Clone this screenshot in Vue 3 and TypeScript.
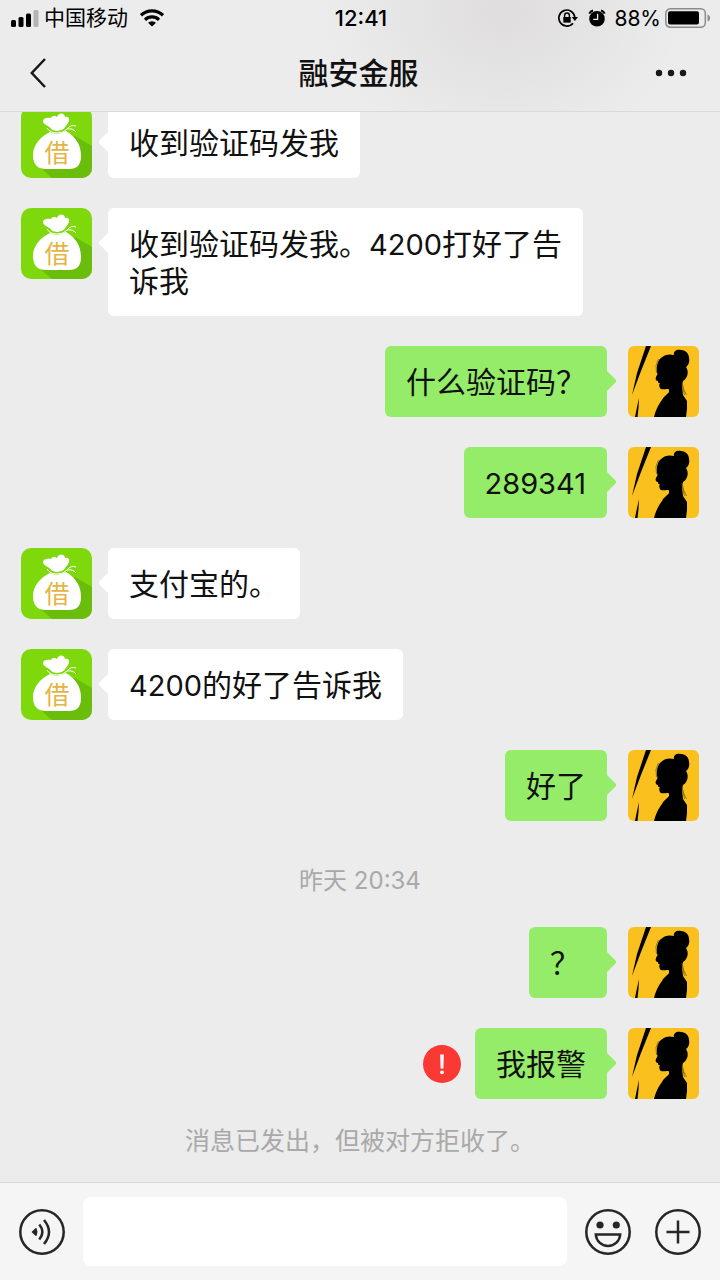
<script setup lang="ts">
import { ref } from 'vue'

interface Message {
  kind: 'message'
  id: number
  from: 'them' | 'me'
  text: string
  failed?: boolean
}

interface Note {
  kind: 'time' | 'notice'
  id: number
  text: string
}

interface Run {
  text: string
  latin: boolean
}

const title = '融安金服'
const draft = ref('')

const entries: (Message | Note)[] = [
  { kind: 'message', id: 1, from: 'them', text: '收到验证码发我' },
  { kind: 'message', id: 2, from: 'them', text: '收到验证码发我。4200打好了告诉我' },
  { kind: 'message', id: 3, from: 'me', text: '什么验证码\uff1f' },
  { kind: 'message', id: 4, from: 'me', text: '289341' },
  { kind: 'message', id: 5, from: 'them', text: '支付宝的。' },
  { kind: 'message', id: 6, from: 'them', text: '4200的好了告诉我' },
  { kind: 'message', id: 7, from: 'me', text: '好了' },
  { kind: 'time', id: 8, text: '昨天 20:34' },
  { kind: 'message', id: 9, from: 'me', text: '\uff1f' },
  { kind: 'message', id: 10, from: 'me', text: '我报警', failed: true },
  { kind: 'notice', id: 11, text: '消息已发出\uff0c但被对方拒收了。' },
]

// Digits are set slightly smaller than the Chinese characters around them.
function runs(text: string): Run[] {
  return text
    .split(/(\d+)/)
    .filter((part) => part !== '')
    .map((part) => ({ text: part, latin: /^\d+$/.test(part) }))
}
</script>

<template>
  <div class="screen">
    <header class="top">
      <div class="status">
        <div class="status-side">
          <svg class="signal" width="28" height="18" viewBox="0 0 28 18" aria-hidden="true">
            <rect x="0" y="11" width="5" height="7" rx="1.5" />
            <rect x="7.5" y="8" width="5" height="10" rx="1.5" />
            <rect x="15" y="4.5" width="5" height="13.5" rx="1.5" />
            <rect x="22.5" y="1" width="5" height="17" rx="1.5" fill="#b4b4b4" />
          </svg>
          <span class="carrier">中国移动</span>
          <svg class="wifi" width="24" height="18" viewBox="0 0 24 18" fill="none" stroke="#000" stroke-width="3.2" aria-hidden="true">
            <path d="M1 6.3A15.8 15.8 0 0 1 23 6.3" />
            <path d="M5 10.8A10 10 0 0 1 19 10.8" />
            <path d="M12 17.5L8 13.8A5.8 5.8 0 0 1 16 13.8Z" fill="#000" stroke="none" />
          </svg>
        </div>
        <time class="clock">12:41</time>
        <div class="status-side status-right">
          <svg width="20" height="18" viewBox="0 0 20 18" fill="none" stroke="#000" stroke-width="1.7" aria-hidden="true">
            <path d="M15 14.2A8 8 0 1 1 16.8 8" />
            <path d="M13.7 8H20L16.9 12Z" fill="#000" stroke="none" />
            <rect x="5.3" y="8" width="7.4" height="5.6" fill="#000" stroke="none" />
            <path d="M6.6 8.5V6.4a2.4 2.4 0 0 1 4.8 0V8.5" stroke-width="1.4" />
          </svg>
          <svg width="18" height="18" viewBox="0 0 18 18" aria-hidden="true">
            <circle cx="9" cy="9.8" r="7.8" />
            <path d="M1.3 4.6A6 6 0 0 1 5 1.5M16.7 4.6A6 6 0 0 0 13 1.5" stroke="#000" stroke-width="2" fill="none" />
            <path d="M9.6 4.8V10.3H5.3" fill="none" stroke="#ececec" stroke-width="1.3" />
          </svg>
          <span class="percent">88%</span>
          <svg width="46" height="20" viewBox="0 0 46 20" aria-hidden="true">
            <rect x="0.8" y="0.8" width="39.5" height="18.4" rx="4.5" fill="none" stroke="#8c8c8c" stroke-width="1.5" />
            <rect x="3" y="3.2" width="31" height="13.4" rx="2" />
            <path d="M42.5 6.5C46 7.5 46 12.5 42.5 13.5Z" fill="#8c8c8c" />
          </svg>
        </div>
      </div>
      <nav class="nav">
        <button class="icon-button" type="button" aria-label="返回">
          <svg width="18" height="32" viewBox="0 0 18 32" fill="none" stroke="#181818" stroke-width="2.5">
            <path d="M15 2L1.8 16L15 30" />
          </svg>
        </button>
        <h1 class="title">{{ title }}</h1>
        <button class="icon-button more" type="button" aria-label="更多">
          <svg width="32" height="8" viewBox="0 0 32 8" fill="#181818">
            <circle cx="4" cy="4" r="3.2" />
            <circle cx="16" cy="4" r="3.2" />
            <circle cx="28" cy="4" r="3.2" />
          </svg>
        </button>
      </nav>
    </header>

    <main class="chat">
      <template v-for="entry in entries" :key="entry.id">
        <div v-if="entry.kind === 'message'" class="row" :class="entry.from">
          <svg v-if="entry.from === 'them'" class="avatar" viewBox="0 0 71 71" aria-hidden="true">
            <rect width="71" height="71" fill="#7fd80c" />
            <path d="M54 29L71 39V71H31L16 58Z" fill="#6bbd0b" />
            <path d="M31 23C28 18 22 18 22 14C22 11 27 10 30 11C31 8 35 9 36 10C37 6 43 5 44 10C47 9 49 11 48 14C47 17 45 18 43 22Q37 26 31 23Z" fill="#fff" />
            <path d="M29 25C19 30 12 38 12 48C12 58 17 62 25 62H48C56 62 60 58 60 49C60 38 55 30 45 24Q36 29 29 25Z" fill="#fff" />
            <path d="M26 21Q29 26 36 26T46 22Q50 17 55 19M46 22Q52 21 55 25" fill="none" stroke="#fff" stroke-width="1" />
            <path d="M28 21.5Q31 24.5 36 24.5T45 21" fill="none" stroke="#7fd80c" stroke-width="1" />
            <text x="36" y="55" class="bag-label">借</text>
          </svg>
          <svg v-else class="avatar" viewBox="0 0 71 71" aria-hidden="true">
            <rect width="71" height="71" fill="#fac01d" />
            <path d="M18 0H23L13 25L4 49L9 27Z" />
            <path d="M11 52L10.5 62L9.5 71H7L9 61Z" />
            <path d="M26 71C28 63 31 58 34 54C36 50 40 48 41 46V43.5C39 42 36 44 33 43C31 42 32 40 31 39L32 37.5L30 36.5V35C28 35 27 33 28 31L29.5 28C28 23 29 15 33 12C37 8 42 8 46 9C45 5 49 3 53 4C58 4 61 8 61 12C62 16 60 20 58 21C61 25 60 32 55 35L54 40L55 49L59 55L59 63L58 71Z" />
            <path d="M30.5 13Q26.5 19 28.5 27M54 36Q55 44 58.5 49M54 38L56.5 49" fill="none" stroke="#6d5710" stroke-width="0.7" />
          </svg>
          <p class="bubble">
            <template v-for="(run, index) in runs(entry.text)" :key="index"><span v-if="run.latin" class="latin">{{ run.text }}</span><template v-else>{{ run.text }}</template></template>
          </p>
          <button v-if="entry.from === 'me' && entry.failed" class="resend" type="button" aria-label="重新发送">
            <svg width="38" height="38" viewBox="0 0 38 38">
              <circle cx="19" cy="19" r="19" fill="#fa3834" />
              <path d="M17.2 9.5H20.8L20.4 23.5H17.6Z" fill="#fff" />
              <circle cx="19" cy="27.3" r="1.9" fill="#fff" />
            </svg>
          </button>
        </div>
        <p v-else class="note" :class="entry.kind">{{ entry.text }}</p>
      </template>
    </main>

    <footer class="composer">
      <button class="icon-button" type="button" aria-label="语音">
        <svg width="46" height="46" viewBox="0 0 46 46" fill="none" stroke="#262626" stroke-width="2.5">
          <circle cx="23" cy="23" r="21.7" />
          <path d="M13.5 23L17 19.8Q18.5 23 17 26.2Z" fill="#262626" stroke-width="1.5" stroke-linejoin="round" />
          <path d="M20.3 15.5Q26.5 23 20.3 30.5" />
          <path d="M25 11Q35 23 25 35" />
        </svg>
      </button>
      <input v-model="draft" class="draft" type="text" aria-label="消息" />
      <button class="icon-button" type="button" aria-label="表情">
        <svg width="46" height="46" viewBox="0 0 46 46" fill="none" stroke="#262626" stroke-width="2.5">
          <circle cx="23" cy="23" r="21.7" />
          <circle cx="15" cy="16" r="3.6" fill="#262626" stroke="none" />
          <circle cx="31.3" cy="16" r="3.6" fill="#262626" stroke="none" />
          <path d="M10.8 25.5H35.2C34.8 32 29.5 37 23 37S11.2 32 10.8 25.5Z" />
        </svg>
      </button>
      <button class="icon-button add" type="button" aria-label="添加">
        <svg width="46" height="46" viewBox="0 0 46 46" fill="none" stroke="#262626" stroke-width="2.5">
          <circle cx="23" cy="23" r="21.7" />
          <path d="M23 11.5V34.5M11.5 23H34.5" />
        </svg>
      </button>
    </footer>
  </div>
</template>

<style>
body {
  margin: 0;
  background: #ececec;
}
</style>

<style scoped>
.screen {
  display: flex;
  flex-direction: column;
  height: 100vh;
  overflow: hidden;
  background: #ececec;
  color: #111;
  font-family: Inter, "Noto Sans CJK SC", sans-serif;
  text-autospace: no-autospace;
}

.top {
  flex: none;
  border-bottom: 1px solid #dadada;
  background: radial-gradient(ellipse 25% 130% at 70% 10%, #dfdddd, #ececec) #ececec;
}

.status {
  display: grid;
  grid-template-columns: 1fr auto 1fr;
  align-items: center;
  height: 36px;
  padding: 0 9px 0 11px;
  color: #000;
}

.status-side {
  display: flex;
  align-items: center;
}

.status-right {
  justify-content: flex-end;
  gap: 10px;
}

.carrier {
  margin: 0 12px 0 5px;
  font-size: 21px;
  line-height: 30px;
}

.clock {
  font-size: 22px;
  font-weight: 500;
}

.percent {
  margin: 0 -6px 0 -2px;
  font-size: 21px;
}

.nav {
  display: grid;
  grid-template-columns: 1fr auto 1fr;
  align-items: center;
  height: 74px;
  padding: 0 33px 1px 30px;
}

.title {
  margin: 0;
  font-size: 30px;
  font-weight: 500;
  line-height: 40px;
}

.icon-button,
.resend {
  display: flex;
  flex: none;
  justify-self: start;
  padding: 0;
  border: 0;
  background: none;
}

.more {
  justify-self: end;
}

.chat {
  display: flex;
  flex: 1;
  flex-direction: column;
  justify-content: flex-end;
  gap: 30px;
  min-height: 0;
  padding: 0 21px 23px;
  overflow: hidden;
}

.row {
  display: flex;
  flex: none;
  align-items: flex-start;
  gap: 16px;
}

.me {
  flex-direction: row-reverse;
  gap: 21px;
}

.avatar {
  flex: none;
  width: 71px;
  height: 71px;
  border-radius: 10px;
}

.me .avatar {
  border-radius: 6px;
}

.bag-label {
  fill: #e5b443;
  font-family: "Noto Sans CJK SC", sans-serif;
  font-size: 25px;
  text-anchor: middle;
}

.bubble {
  position: relative;
  box-sizing: border-box;
  min-width: 78px;
  max-width: calc(100% - 203px);
  margin: 0;
  padding: 18px 21px 16px;
  border-radius: 6px;
  background: #fff;
  font-size: 30px;
  line-height: 37px;
}

.latin {
  font-size: 29px;
  line-height: 1;
}

.me .bubble {
  background: #95ec69;
}

.bubble::before {
  position: absolute;
  top: 25px;
  right: 100%;
  width: 9px;
  height: 20px;
  background: inherit;
  clip-path: polygon(0 45%, 100% 0, 100% 100%, 0 55%);
  content: "";
}

.me .bubble::before {
  right: auto;
  left: 100%;
  clip-path: polygon(0 0, 100% 45%, 100% 55%, 0 100%);
}

.resend {
  align-self: center;
  margin: 0 -7px;
}

.note {
  flex: none;
  margin: 0;
  color: #a9a9a9;
  font-size: 25px;
  line-height: 36px;
  text-align: center;
}

.time {
  margin-bottom: -2px;
  padding-top: 12px;
  font-size: 24px;
}

.notice {
  margin-top: -6px;
}

.composer {
  display: flex;
  flex: none;
  align-items: center;
  gap: 18px;
  padding: 14px 19px;
  border-top: 1px solid #d9d9d9;
  background: #f5f5f5;
}

.draft {
  box-sizing: border-box;
  flex: 1;
  min-width: 0;
  height: 69px;
  padding: 0 16px;
  border: 0;
  border-radius: 8px;
  outline: 0;
  background: #fff;
  font: inherit;
  font-size: 30px;
}

.add {
  margin-left: 6px;
}
</style>
